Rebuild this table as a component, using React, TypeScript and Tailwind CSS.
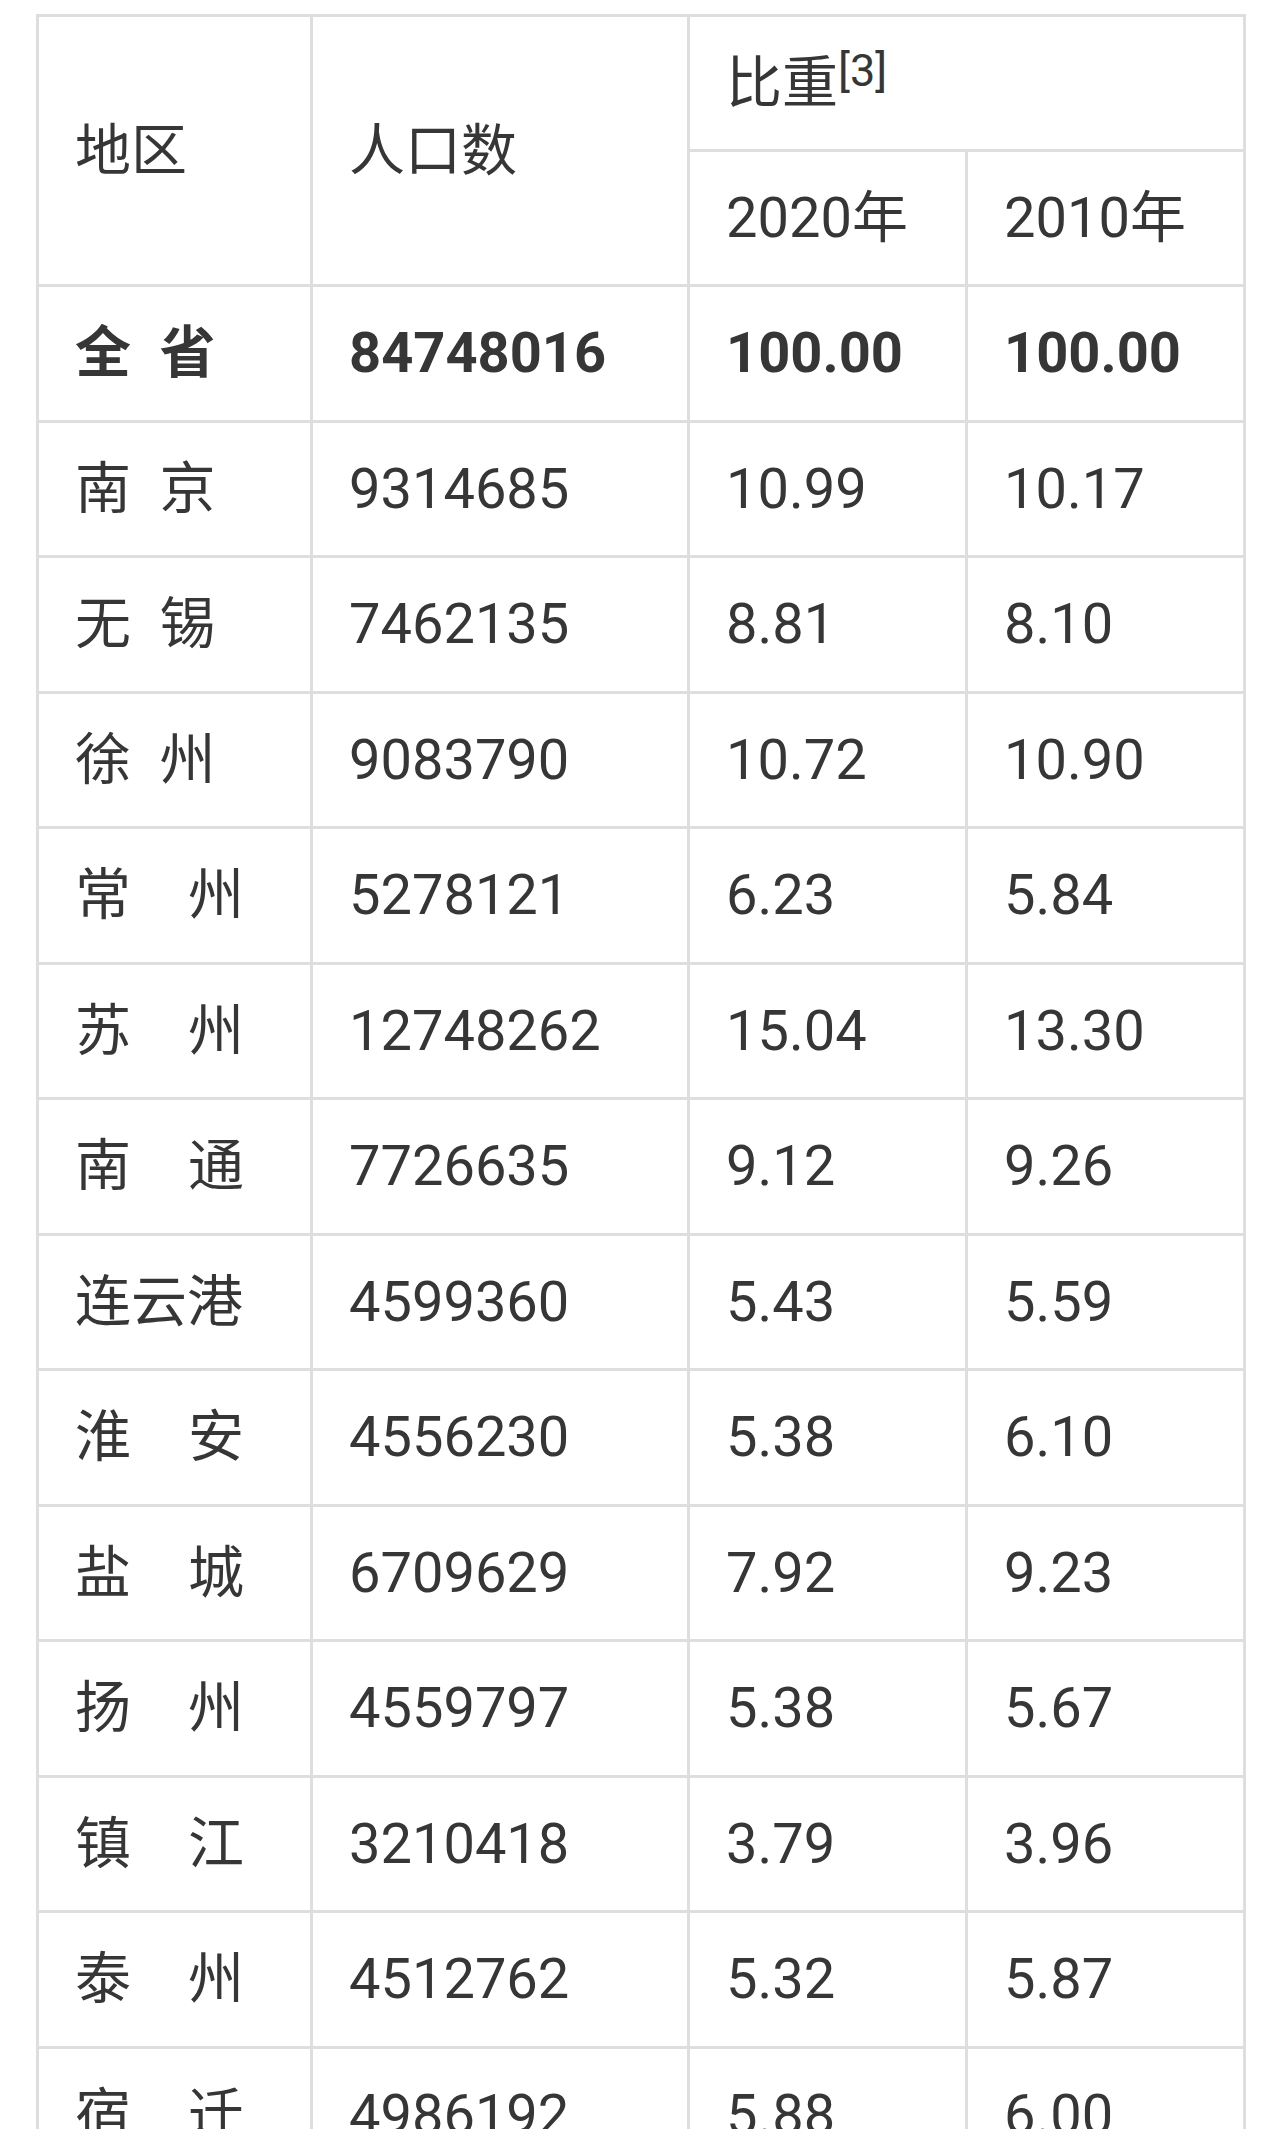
const rows: [string, string, string, string][] = [
  ['南\u2002京', '9314685', '10.99', '10.17'],
  ['无\u2002锡', '7462135', '8.81', '8.10'],
  ['徐\u2002州', '9083790', '10.72', '10.90'],
  ['常\u2002\u2002州', '5278121', '6.23', '5.84'],
  ['苏\u2002\u2002州', '12748262', '15.04', '13.30'],
  ['南\u2002\u2002通', '7726635', '9.12', '9.26'],
  ['连云港', '4599360', '5.43', '5.59'],
  ['淮\u2002\u2002安', '4556230', '5.38', '6.10'],
  ['盐\u2002\u2002城', '6709629', '7.92', '9.23'],
  ['扬\u2002\u2002州', '4559797', '5.38', '5.67'],
  ['镇\u2002\u2002江', '3210418', '3.79', '3.96'],
  ['泰\u2002\u2002州', '4512762', '5.32', '5.87'],
  ['宿\u2002\u2002迁', '4986192', '5.88', '6.00'],
]

const cell = 'border-[3px] border-[#dedede] pl-[36px] pr-2 align-middle text-left whitespace-nowrap'

export default function App() {
  return (
    <div className="min-h-screen bg-white pt-[14px] pl-[36px] text-[#363636] font-['Roboto','Noto_Sans_CJK_SC',sans-serif] text-[56px] leading-none">
      <table className="border-collapse table-fixed w-[1207px]">
        <colgroup>
          <col className="w-[274px]" />
          <col className="w-[377px]" />
          <col className="w-[278px]" />
          <col className="w-[278px]" />
        </colgroup>
        <thead>
          <tr className="h-[135px]">
            <th rowSpan={2} className={`${cell} font-normal`}>地区</th>
            <th rowSpan={2} className={`${cell} font-normal`}>人口数</th>
            <th colSpan={2} className={`${cell} font-normal`}>
              比重<sup className="text-[45px] relative -top-[16px] align-baseline">[3]</sup>
            </th>
          </tr>
          <tr className="h-[135px]">
            <th className={`${cell} font-normal`}>2020年</th>
            <th className={`${cell} font-normal`}>2010年</th>
          </tr>
        </thead>
        <tbody>
          <tr className="h-[135.5px] font-bold">
            <td className={cell}>全&#8194;省</td>
            <td className={cell}>84748016</td>
            <td className={cell}>100.00</td>
            <td className={cell}>100.00</td>
          </tr>
          {rows.map(([area, pop, a, b]) => (
            <tr key={area} className="h-[135.5px]">
              <td className={cell}>{area}</td>
              <td className={cell}>{pop}</td>
              <td className={cell}>{a}</td>
              <td className={cell}>{b}</td>
            </tr>
          ))}
        </tbody>
      </table>
    </div>
  )
}
